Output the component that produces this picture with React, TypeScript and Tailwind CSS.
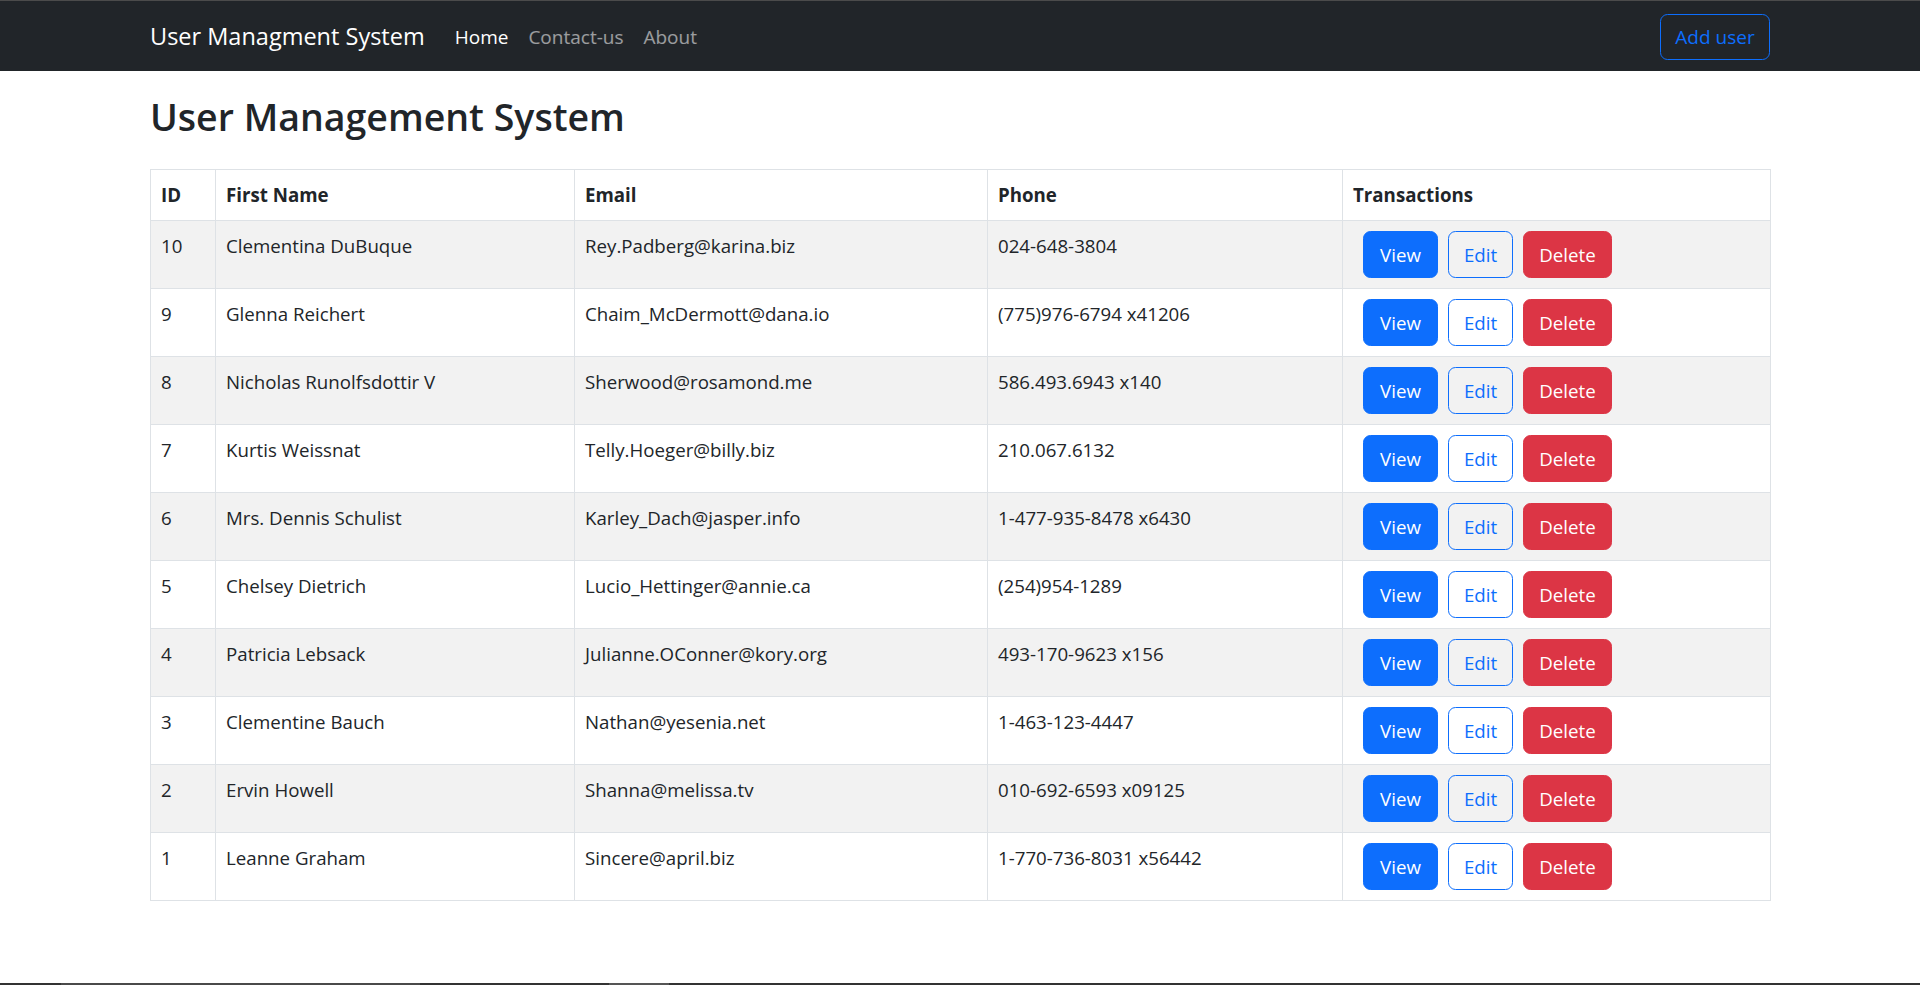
import React from "react";

type User = { id: number; name: string; email: string; phone: string };

const users: User[] = [
  { id: 10, name: "Clementina DuBuque", email: "Rey.Padberg@karina.biz", phone: "024-648-3804" },
  { id: 9, name: "Glenna Reichert", email: "Chaim_McDermott@dana.io", phone: "(775)976-6794 x41206" },
  { id: 8, name: "Nicholas Runolfsdottir V", email: "Sherwood@rosamond.me", phone: "586.493.6943 x140" },
  { id: 7, name: "Kurtis Weissnat", email: "Telly.Hoeger@billy.biz", phone: "210.067.6132" },
  { id: 6, name: "Mrs. Dennis Schulist", email: "Karley_Dach@jasper.info", phone: "1-477-935-8478 x6430" },
  { id: 5, name: "Chelsey Dietrich", email: "Lucio_Hettinger@annie.ca", phone: "(254)954-1289" },
  { id: 4, name: "Patricia Lebsack", email: "Julianne.OConner@kory.org", phone: "493-170-9623 x156" },
  { id: 3, name: "Clementine Bauch", email: "Nathan@yesenia.net", phone: "1-463-123-4447" },
  { id: 2, name: "Ervin Howell", email: "Shanna@melissa.tv", phone: "010-692-6593 x09125" },
  { id: 1, name: "Leanne Graham", email: "Sincere@april.biz", phone: "1-770-736-8031 x56442" },
];

function Navbar() {
  return (
    <nav className="h-[71px] bg-[#212529] border-t border-[#4b4b4b]">
      <div className="mx-auto w-[1650px] px-[15px] h-full flex items-center pt-[2px]">
        <span className="text-[23.5px] leading-[37.5px] text-white mr-[20px]">
          User Managment System
        </span>
        <a className="px-[10px] text-[19px] leading-[30px] text-white">Home</a>
        <a className="px-[10px] text-[19px] leading-[30px] text-white/55">Contact-us</a>
        <a className="px-[10px] text-[19px] leading-[30px] text-white/55">About</a>
        <button className="ml-auto w-[110px] h-[46px] rounded-[7.5px] border border-[#0d6efd] text-[#0d6efd] text-[19px] leading-[30px]">
          Add user
        </button>
      </div>
    </nav>
  );
}

function Row({ u, striped }: { u: User; striped: boolean }) {
  const td = "border border-[#dee2e6] px-[10px] py-[10px] align-top";
  return (
    <tr className={striped ? "bg-[#f2f2f2]" : "bg-white"}>
      <td className={td}>{u.id}</td>
      <td className={td}>{u.name}</td>
      <td className={td}>{u.email}</td>
      <td className={td}>{u.phone}</td>
      <td className={td}>
        <div className="flex">
          <button className="ml-[10px] w-[75px] h-[47px] rounded-[7.5px] bg-[#0d6efd] border border-[#0d6efd] text-white">
            View
          </button>
          <button className="ml-[10px] w-[65px] h-[47px] rounded-[7.5px] border border-[#0d6efd] text-[#0d6efd]">
            Edit
          </button>
          <button className="ml-[10px] w-[89px] h-[47px] rounded-[7.5px] bg-[#dc3545] border border-[#dc3545] text-white">
            Delete
          </button>
        </div>
      </td>
    </tr>
  );
}

export default function App() {
  const th = "border border-[#dee2e6] px-[10px] py-[10px] text-left font-bold align-top";
  return (
    <div className="h-[985px] flex flex-col bg-white text-[#212529] font-['Open_Sans',sans-serif] text-[18.7px] leading-[30px]">
      <Navbar />
      <main className="mx-auto w-[1650px] px-[15px]">
        <h1 className="mt-[22px] mb-[28px] text-[37.5px] leading-[48px] font-semibold">
          User Management System
        </h1>
        <table className="w-[1620px] table-fixed border-collapse border border-[#dee2e6]">
          <colgroup>
            <col className="w-[65px]" />
            <col className="w-[359px]" />
            <col className="w-[413px]" />
            <col className="w-[355px]" />
            <col className="w-[428px]" />
          </colgroup>
          <thead>
            <tr>
              <th className={th}>ID</th>
              <th className={th}>First Name</th>
              <th className={th}>Email</th>
              <th className={th}>Phone</th>
              <th className={th}>Transactions</th>
            </tr>
          </thead>
          <tbody>
            {users.map((u, i) => (
              <Row key={u.id} u={u} striped={i % 2 === 0} />
            ))}
          </tbody>
        </table>
      </main>
      <div className="mt-auto h-[2px] bg-[#333333] flex">
        <div className="ml-[61px] w-[359px] bg-[#4a4a4a]" />
        <div className="ml-[189px] w-[60px] bg-[#555555]" />
      </div>
    </div>
  );
}
